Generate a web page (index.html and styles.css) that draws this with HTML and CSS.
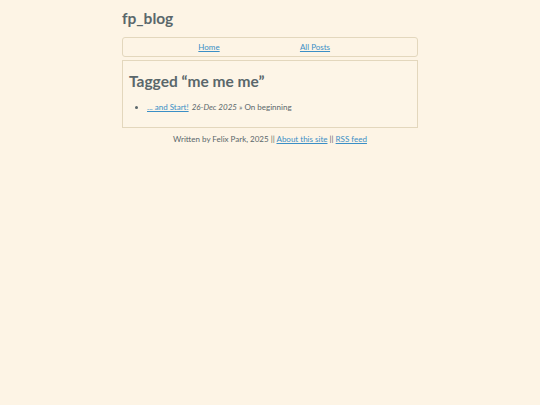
FILE: index.html
```html
<!DOCTYPE html>
<html lang="en">

<head>
    <meta charset="UTF-8">
    <meta name="viewport" content="width=device-width, initial-scale=1.0">
    <title>fp_blog - Tagged me me me</title>
    <link rel="stylesheet" href="styles.css">
</head>

<body>
    <div class="wrapper">
        <!-- tiêu đề blog -->
        <header class="site-header">
            <h1 class="site-title">fp_blog</h1>
        </header>

        <!-- menu -->
        <nav class="nav">
            <a href="#">Home</a>
            <a href="#">All Posts</a>
        </nav>

        <!-- nội dung -->
        <main class="content">
            <h2>Tagged &ldquo;me me me&rdquo;</h2>
            <ul class="post-list">
                <li>
                    <a href="#">... and Start!</a>
                    <em>26-Dec 2025</em> &raquo; On beginning
                </li>
            </ul>
        </main>

        <footer class="footer">
            Written by Felix Park, 2025 || <a href="#">About this site</a> || <a href="#">RSS feed</a>
        </footer>
    </div>
</body>

</html>
```

FILE: styles.css
```css
/* nền và font chung */
body {
    margin: 0;
    background-color: #fdf4e5;
    color: #5a676b;
    font-family: Lato, "Open Sans", sans-serif;
}

a {
    color: #3b8fc6;
}

.wrapper {
    width: 296px;
    margin: 0 auto;
    padding-top: 8px;
}

.site-title {
    margin: 0;
    font-size: 15.5px;
    line-height: 20px;
    font-weight: bold;
    color: #5a676b;
}

/* menu */
.nav {
    display: flex;
    justify-content: center;
    margin-top: 9px;
    padding: 0 16px 0 0;
    height: 18px;
    align-items: center;
    border: 1px solid #e3d7bd;
    border-radius: 3px;
    font-size: 8px;
}

.nav a {
    width: 106px;
    text-align: center;
}

/* khung nội dung */
.content {
    margin-top: 3px;
    padding: 10px 6px 14px;
    border: 1px solid #e3d7bd;
    background-color: #fdf5e7;
}

.content h2 {
    margin: 0;
    font-size: 15.5px;
    line-height: 20px;
    font-weight: bold;
}

.post-list {
    margin: 10px 0 0;
    padding-left: 18px;
    font-size: 8px;
    line-height: 12px;
}

.post-list em {
    margin-left: 1px;
}

.footer {
    margin-top: 6px;
    text-align: center;
    font-size: 8px;
    line-height: 10px;
}
```
